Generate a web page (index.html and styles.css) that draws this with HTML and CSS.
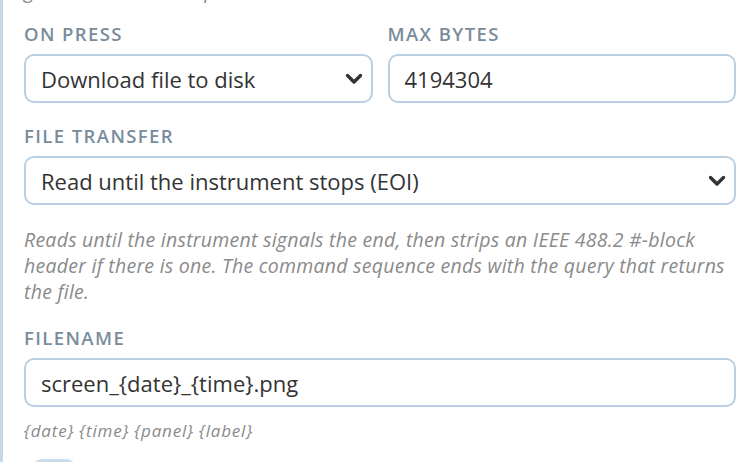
FILE: index.html
```html
<!DOCTYPE html>
<html lang="en">
<head>
<meta charset="utf-8">
<title>File transfer settings</title>
<link rel="stylesheet" href="styles.css">
</head>
<body>
<div class="panel">
  <p class="hint hint-top">gets the screen to capture</p>

  <div class="row two">
    <div class="field">
      <div class="label">ON PRESS</div>
      <div class="control select">
        <span>Download file to disk</span>
        <svg class="chev" viewBox="0 0 18 12" width="18" height="12"><polyline points="2.5,2.5 9,9 15.5,2.5" fill="none" stroke="#333" stroke-width="3.4" stroke-linecap="round" stroke-linejoin="round"/></svg>
      </div>
    </div>
    <div class="field">
      <div class="label">MAX BYTES</div>
      <div class="control"><span>4194304</span></div>
    </div>
  </div>

  <div class="row">
    <div class="label">FILE TRANSFER</div>
    <div class="control select">
      <span>Read until the instrument stops (EOI)</span>
      <svg class="chev" viewBox="0 0 18 12" width="18" height="12"><polyline points="2.5,2.5 9,9 15.5,2.5" fill="none" stroke="#333" stroke-width="3.4" stroke-linecap="round" stroke-linejoin="round"/></svg>
    </div>
    <p class="hint hint-block">Reads until the instrument signals the end, then strips an IEEE 488.2 #-block header if there is one. The command sequence ends with the query that returns the file.</p>
  </div>

  <div class="row">
    <div class="label">FILENAME</div>
    <div class="control"><span>screen_{date}_{time}.png</span></div>
    <p class="hint hint-small">{date} {time} {panel} {label}</p>
  </div>

  <div class="toggle"></div>
</div>
</body>
</html>
```

FILE: styles.css
```css
html, body {
  margin: 0;
  padding: 0;
  background: #ffffff;
  height: 100%;
  overflow: hidden;
}

body {
  font-family: "Open Sans", "Noto Sans", sans-serif;
  color: #333333;
}

.panel {
  border-left: 3px solid #c6d7e8;
  padding: 0 20px 0 21px;
  min-height: 100%;
  box-sizing: border-box;
}

.hint {
  margin: 0;
  font-style: italic;
  color: #8a8a8a;
}

.hint-top {
  font-size: 19.5px;
  letter-spacing: 0.25px;
  line-height: 26px;
  margin-top: -22px;
}

.row {
  margin-top: 18px;
}

.row.two {
  display: grid;
  grid-template-columns: 1fr 1fr;
  column-gap: 15px;
}

.row + .row {
  margin-top: 21px;
}

.label {
  font-size: 18.5px;
  line-height: 24px;
  font-weight: 600;
  letter-spacing: 1.4px;
  color: #7a8c9c;
  margin-bottom: 8px;
}

.control {
  height: 49px;
  box-sizing: border-box;
  border: 2px solid #bacfe1;
  border-radius: 10px;
  padding: 0 14px 0 15px;
  display: flex;
  align-items: center;
  justify-content: space-between;
  font-size: 22px;
  color: #333333;
  background: #ffffff;
}

.chev {
  display: block;
  flex: none;
  margin-right: -6px;
}

.hint-block {
  font-size: 19.5px;
  letter-spacing: 0.25px;
  line-height: 26px;
  margin-top: 22px;
}

.hint-small {
  font-size: 17px;
  letter-spacing: 0.8px;
  line-height: 22px;
  margin-top: 13px;
}

.toggle {
  margin-top: 17px;
  margin-left: 5px;
  width: 50px;
  height: 28px;
  border-radius: 14px;
  background: #c9dcea;
}
```
